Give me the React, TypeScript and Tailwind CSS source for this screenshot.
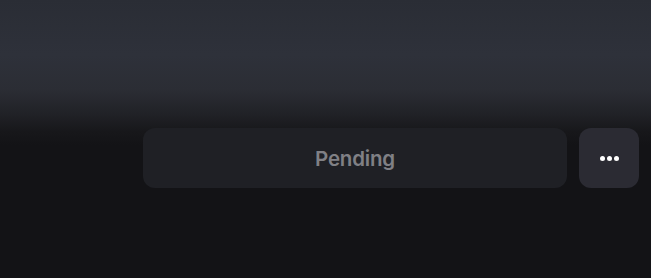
export default function App() {
  return (
    <main
      className="w-full h-[278px] flex justify-end items-start pt-[128px] pr-3 gap-3 bg-[linear-gradient(to_bottom,#2a2d35_0px,#2e313a_55px,#2b2d34_90px,#202126_115px,#17171a_132px,#131316_145px,#131316_278px)]"
      style={{ fontFamily: 'Inter, "Noto Sans", sans-serif' }}
    >
      <button
        type="button"
        className="w-[424px] h-[60px] pt-[2px] rounded-[12px] bg-[#1f2025] flex items-center justify-center text-[20.5px] font-semibold text-[#808085] tracking-[-0.2px]"
      >
        Pending
      </button>
      <button
        type="button"
        className="w-[60px] h-[60px] rounded-[12px] bg-[#2b2b33] flex items-center justify-center gap-[2px]"
      >
        <span className="w-[5px] h-[5px] rounded-full bg-white" />
        <span className="w-[5px] h-[5px] rounded-full bg-white" />
        <span className="w-[5px] h-[5px] rounded-full bg-white" />
      </button>
    </main>
  )
}
